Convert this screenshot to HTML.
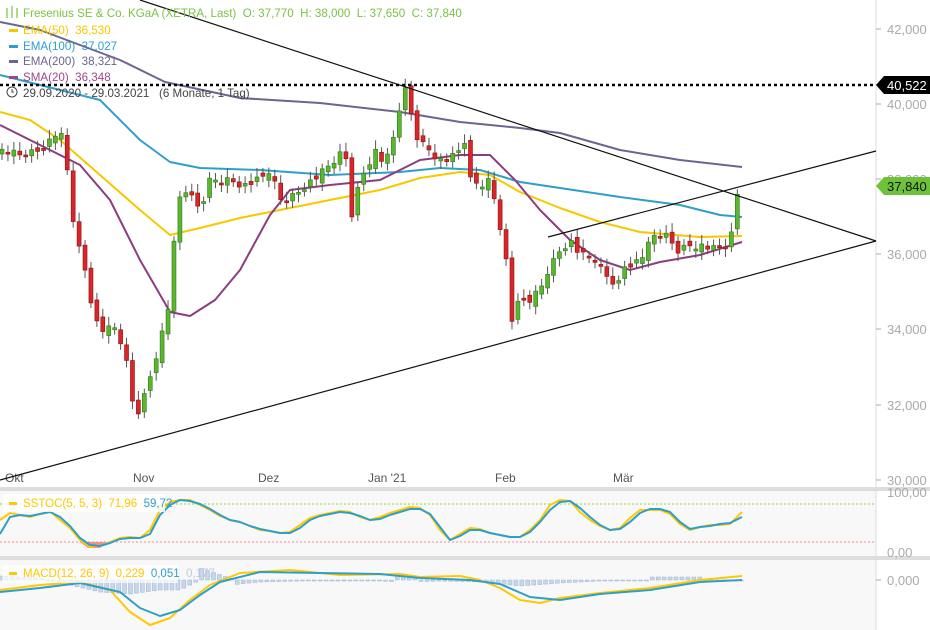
<!DOCTYPE html>
<html><head><meta charset="utf-8"><style>
body{margin:0;width:930px;height:630px;overflow:hidden;background:#fff;font-family:"Liberation Sans",sans-serif}
svg{display:block}
text{white-space:pre}
</style></head><body>
<svg id="s" width="930" height="630" xmlns="http://www.w3.org/2000/svg" font-family="Liberation Sans, sans-serif" xml:space="preserve">
<rect x="0" y="0" width="930" height="630" fill="#fff"/>
<rect x="0" y="491" width="876" height="65" fill="#f8f8f8"/>
<rect x="0" y="560" width="876" height="70" fill="#f8f8f8"/>
<rect x="0" y="487" width="930" height="4" fill="#ddd"/>
<rect x="0" y="556" width="930" height="4" fill="#ddd"/>
<line x1="876" y1="0" x2="876" y2="630" stroke="#ddd"/>
<g fill="#aaa" font-size="13">
<text x="887" y="34">42,000</text><text x="887" y="109">40,000</text><text x="887" y="184">38,000</text>
<text x="887" y="259">36,000</text><text x="887" y="334">34,000</text><text x="887" y="410">32,000</text><text x="887" y="485">30,000</text>
<text x="887" y="497">100,00</text><text x="887" y="557">0,00</text><text x="887" y="585">0,000</text>
</g>
<g stroke="#aaa"><line x1="876" y1="29" x2="881" y2="29"/><line x1="876" y1="104" x2="881" y2="104"/><line x1="876" y1="179" x2="881" y2="179"/><line x1="876" y1="254" x2="881" y2="254"/><line x1="876" y1="329" x2="881" y2="329"/><line x1="876" y1="405" x2="881" y2="405"/><line x1="876" y1="480" x2="881" y2="480"/><line x1="876" y1="580" x2="881" y2="580"/></g>
<g fill="#555" font-size="12"><text x="5" y="482">Okt</text><text x="133" y="482">Nov</text><text x="258" y="482">Dez</text><text x="368" y="482">Jan '21</text><text x="495" y="482">Feb</text><text x="613" y="482">Mär</text></g>
<g fill="none" stroke-width="2" stroke-linejoin="round">
<polyline stroke="#6b6590" points="0,22 40,30 120,60 165,82 240,98 320,103 400,112 460,122 520,128 560,133 620,150 680,160 742,167"/>
<polyline stroke="#2e9fc9" points="0,75 40,85 100,100 140,140 170,162 200,168 260,170 330,175 400,172 440,168 480,170 520,182 560,188 620,197 680,205 720,215 742,217"/>
<polyline stroke="#f5c800" points="0,112 30,120 60,140 100,175 140,210 170,235 200,228 240,218 280,210 330,200 380,190 420,178 460,172 490,175 520,192 560,208 600,222 640,232 700,237 742,236"/>
<polyline stroke="#8b3d80" points="0,125 40,145 80,165 110,200 140,260 170,312 190,316 215,300 240,270 270,215 290,190 330,185 380,180 420,160 460,155 490,155 515,180 540,210 570,240 600,260 630,270 660,262 700,255 742,242"/>
</g>
<g id="c"></g>
<g stroke="#111" stroke-width="1.2">
<line x1="0" y1="480" x2="876" y2="241"/><line x1="140" y1="0" x2="876" y2="241"/><line x1="548" y1="237" x2="876" y2="151"/>
</g>
<line x1="0" y1="85" x2="876" y2="85" stroke="#000" stroke-width="2.5" stroke-dasharray="3,3"/>
<path d="M876,85 L884,76 H930 V94 H884 Z" fill="#000"/><text x="887" y="90" fill="#fff" font-size="13">40,522</text>
<path d="M876,186 L884,177 H930 V195 H884 Z" fill="#6cc33a"/><text x="887" y="191" fill="#111" font-size="13">37,840</text>
<g font-size="11.6">
<g stroke="#7cc243" stroke-width="1.2"><line x1="7" y1="8" x2="7" y2="18"/><line x1="12" y1="6" x2="12" y2="18"/><line x1="17" y1="8" x2="17" y2="18"/></g>
<text x="23" y="17" fill="#7cc243">Fresenius SE &amp; Co. KGaA (XETRA, Last)  O: 37,770  H: 38,000  L: 37,650  C: 37,840</text>
<rect x="9" y="29" width="9" height="3" fill="#f5c800"/><text x="23" y="34" fill="#f5c800">EMA(50)  36,530</text>
<rect x="9" y="45" width="9" height="3" fill="#2e9fc9"/><text x="23" y="50" fill="#2e9fc9">EMA(100)  37,027</text>
<rect x="9" y="60" width="9" height="3" fill="#6b6590"/><text x="23" y="65" fill="#6b6590">EMA(200)  38,321</text>
<rect x="9" y="76" width="9" height="3" fill="#a0468f"/><text x="23" y="81" fill="#a0468f">SMA(20)  36,348</text>
<circle cx="12" cy="92" r="5" fill="#fff" stroke="#444"/><path d="M12,89 V92 H14" stroke="#444" fill="none"/>
<text x="23" y="97" fill="#444">29.09.2020 - 29.03.2021   (6 Monate, 1 Tag)</text>
</g>
<line x1="0" y1="504" x2="876" y2="504" stroke="#9c3" stroke-dasharray="2,2"/>
<line x1="0" y1="542" x2="876" y2="542" stroke="#f88" stroke-dasharray="2,2"/>
<path d="M80,542 L88,548 L100,548 L106,542Z" fill="#e77" opacity="0.8"/>
<g fill="none" stroke-width="2" stroke-linejoin="round">
<polyline stroke="#ffc800" points="0,520 10,513 20,515 30,517 40,514 50,511 60,520 70,528 80,540 90,547 100,546 110,542 120,538 130,537 140,538 150,530 160,510 170,502 180,500 190,500 200,505 210,510 220,516 230,520 240,522 250,526 260,530 270,531 280,533 290,532 300,525 310,518 320,515 330,513 340,511 350,512 360,517 370,520 380,517 390,513 400,510 410,507 420,508 430,515 440,530 450,540 460,534 470,528 480,529 490,533 500,535 510,537 520,537 530,530 540,520 550,505 560,500 570,501 580,512 590,520 600,526 610,530 620,528 630,518 640,510 650,510 660,510 670,514 680,524 690,530 700,527 710,525 720,525 730,524 742,512"/>
<polyline stroke="#2e9fc9" points="0,534 10,517 20,515 30,516 40,514 50,512 60,517 70,526 80,538 90,545 100,546 110,543 120,539 130,538 140,538 150,534 160,515 170,505 180,500 190,501 200,504 210,509 220,515 230,520 240,522 250,526 260,529 270,531 280,533 290,533 300,528 310,520 320,516 330,514 340,512 350,513 360,516 370,520 380,519 390,515 400,512 410,509 420,509 430,514 440,527 450,540 460,536 470,530 480,530 490,533 500,535 510,537 520,537 530,532 540,522 550,510 560,502 570,501 580,508 590,517 600,525 610,530 620,529 630,522 640,513 650,509 660,509 670,512 680,522 690,529 700,527 710,526 720,524 730,523 742,517"/>
</g>
<rect x="3" y="494" width="162" height="18" fill="#fff" opacity="0.8"/>
<rect x="9" y="502" width="8" height="3" fill="#ffc800"/>
<text x="23" y="507" font-size="11.5" fill="#ffc800">SSTOC(5, 5, 3)  71,96  <tspan fill="#2e9fc9">59,72</tspan></text>
<g id="h" fill="#c8d6ea" stroke="#9fb6d8" stroke-width="0.5"></g>
<g fill="none" stroke-width="2" stroke-linejoin="round">
<polyline stroke="#ffc800" points="0,590 40,585 80,582 110,590 130,612 150,625 170,618 190,600 210,585 240,573 290,570 340,575 400,574 420,577 460,576 480,580 500,588 520,600 540,603 560,598 600,593 650,588 700,580 742,576"/>
<polyline stroke="#2e9fc9" points="0,592 40,588 80,583 120,592 140,608 160,616 180,610 200,595 220,582 260,572 320,573 380,574 420,578 470,580 500,584 530,597 560,600 600,594 650,590 700,582 742,580"/>
</g>
<rect x="3" y="565" width="175" height="18" fill="#fff" opacity="0.7"/>
<rect x="9" y="572" width="8" height="3" fill="#ffc800"/>
<text x="23" y="577" font-size="11.5" fill="#ffc800">MACD(12, 26, 9)  0,229  <tspan fill="#2e9fc9">0,051</tspan>  <tspan fill="#bcd">0,177</tspan></text>
</svg>
<script>
(function(){
var pts=[[2,150],[20,155],[40,150],[60,130],[68,175],[75,235],[85,270],[92,305],[100,335],[110,320],[120,340],[128,370],[135,420],[145,395],[155,360],[163,330],[170,300],[176,205],[185,190],[200,210],[210,180],[230,180],[245,185],[260,180],[270,170],[280,200],[295,195],[305,185],[320,175],[335,160],[345,150],[352,215],[360,180],[375,150],[385,165],[392,145],[400,105],[405,90],[418,140],[430,150],[440,160],[450,160],[460,150],[465,140],[470,180],[480,185],[490,180],[497,210],[505,250],[512,320],[520,300],[530,300],[540,290],[548,270],[560,250],[570,240],[580,255],[595,260],[605,275],[618,285],[625,265],[640,260],[655,235],[665,235],[678,250],[690,245],[700,245],[715,250],[730,245],[737,195],[742,185]];
function f(x){for(var i=1;i<pts.length;i++){if(x<=pts[i][0]){var a=pts[i-1],b=pts[i],t=(x-a[0])/(b[0]-a[0]);return a[1]+t*(b[1]-a[1]);}}return 185;}
var h='',prev=f(2),k=0;
for(var x=2;x<=743;x+=5.93){k++;var c=f(x)+((k*37)%11-5)*0.8;var o=prev+((k*53)%9-4);var ty=Math.min(o,c),by=Math.max(o,c);if(by-ty<2)by=ty+2;var up=c<o;var col=up?'#5bb52f':'#d8262a';var st=up?'#2d7a18':'#8a1010';
h+='<line x1="'+x+'" y1="'+(ty-5-(k%5))+'" x2="'+x+'" y2="'+(by+5+(k%4))+'" stroke="#555" stroke-width="1"/>';
h+='<rect x="'+(x-2)+'" y="'+ty+'" width="4" height="'+(by-ty)+'" fill="'+col+'" stroke="'+st+'" stroke-width="0.6"/>';prev=c;}
document.getElementById('c').innerHTML=h;
var hv=[[0,4],[40,2],[100,-12],[130,-14],[160,-10],[180,-10],[200,0],[215,-12],[230,-5],[260,-2],[300,-1],[380,-1],[400,-2],[440,-1],[480,-2],[520,-6],[560,-3],[600,-1],[640,0],[660,-3],[700,-1],[742,-1]];
function g(x){for(var i=1;i<hv.length;i++){if(x<=hv[i][0]){var a=hv[i-1],b=hv[i],t=(x-a[0])/(b[0]-a[0]);return a[1]+t*(b[1]-a[1]);}}return 0;}
var hh='';for(var x=0;x<=742;x+=5.93){var v=g(x);if(x>170&&x<235)v=x<200?v:12-(x-200)/3;if(x>395&&x<420)v=3;if(x>650&&x<700)v=3;var y=v>0?580-v:580;hh+='<rect x="'+(x-2)+'" y="'+y+'" width="4" height="'+Math.max(Math.abs(v),1)+'"/>';}
document.getElementById('h').innerHTML=hh;
})();
</script>
</body></html>
